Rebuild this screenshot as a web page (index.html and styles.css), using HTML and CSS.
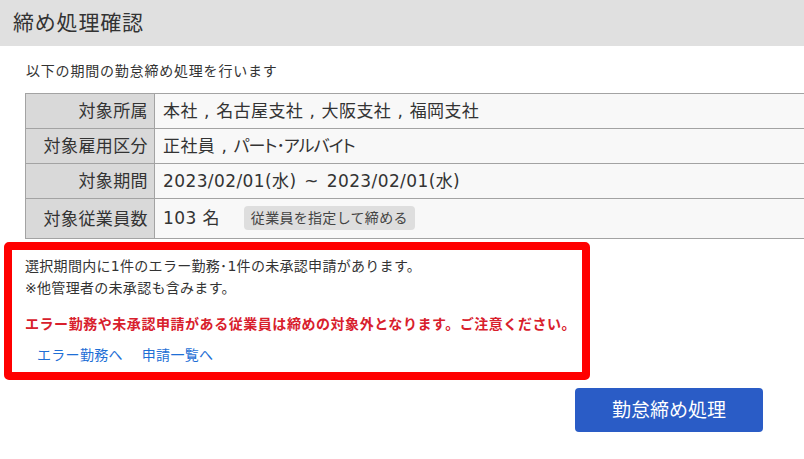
FILE: index.html
```html
<!DOCTYPE html>
<html lang="ja">
<head>
<meta charset="utf-8">
<title>締め処理確認</title>
<link rel="stylesheet" href="styles.css">
</head>
<body>
<header class="page-head">
  <h1 class="page-title">締め処理確認</h1>
</header>
<main class="content">
  <p class="lead">以下の期間の勤怠締め処理を行います</p>
  <table class="summary">
    <tr>
      <th>対象所属</th>
      <td>本社 , 名古屋支社 , 大阪支社 , 福岡支社</td>
    </tr>
    <tr>
      <th>対象雇用区分</th>
      <td>正社員 , <span class="kana">パート･アルバイト</span></td>
    </tr>
    <tr>
      <th>対象期間</th>
      <td class="period">2023/02/01(水) ~ 2023/02/01(水)</td>
    </tr>
    <tr class="row-tall">
      <th>対象従業員数</th>
      <td><span class="count">103 名</span><button class="chip" type="button">従業員を指定して締める</button></td>
    </tr>
  </table>
  <section class="alert">
    <p class="alert-line">選択期間内に1件のエラー勤務･1件の未承認申請があります。</p>
    <p class="alert-line">※他管理者の未承認も含みます。</p>
    <p class="alert-warn">エラー勤務や未承認申請がある従業員は締めの対象外となります。ご注意ください。</p>
    <nav class="alert-links">
      <a href="#">エラー勤務へ</a>
      <a href="#">申請一覧へ</a>
    </nav>
  </section>
  <div class="actions">
    <button class="primary" type="button">勤怠締め処理</button>
  </div>
</main>
</body>
</html>
```
FILE: styles.css
```css
html, body {
  margin: 0;
  padding: 0;
  background: #fff;
  overflow: hidden;
}

/* Verdana-like Latin with a Japanese face for kana and kanji */
body {
  font-family: "DejaVu Sans", "Noto Sans CJK JP", sans-serif;
  color: #333;
  width: 804px;
  height: 459px;
}

.page-head {
  height: 46px;
  background: #e0e0e0;
  padding-left: 13px;
  display: flex;
  align-items: center;
}

.page-title {
  margin: 0;
  font-size: 21px;
  font-weight: 400;
  line-height: 28px;
  letter-spacing: 0.8px;
  color: #333;
}

.content {
  display: flex;
  flex-direction: column;
}

.lead {
  margin: 15px 0 0 26px;
  font-size: 14px;
  line-height: 20px;
  letter-spacing: 0.8px;
}

.summary {
  margin: 12px 0 0 25px;
  width: 800px;
  border-collapse: collapse;
  font-size: 17px;
  letter-spacing: 0.4px;
}

.summary tr {
  height: 35px;
}

.summary tr.row-tall {
  height: 40px;
}

.summary th,
.summary td {
  border: 1px solid #a3a3a3;
  padding: 0;
  line-height: 22px;
  font-weight: 400;
}

.summary th {
  width: 122px;
  background: #d9d9d9;
  text-align: right;
  padding-right: 6px;
  color: #333;
}

.summary td {
  background: #f8f8f8;
  padding-left: 8px;
  color: #333;
  word-spacing: 0.5px;
}

.summary td.period {
  word-spacing: 2px;
}

/* proportional katakana, as the employment type is set narrow */
.kana {
  font-feature-settings: "palt";
  letter-spacing: -1px;
}

.count {
  display: inline-block;
  margin-right: 24px;
  word-spacing: 0;
}

.chip {
  font: inherit;
  font-size: 14px;
  letter-spacing: 0.3px;
  word-spacing: 0;
  line-height: 24px;
  height: 24px;
  padding: 0 7px;
  border: 0;
  border-radius: 4px;
  background: #dedede;
  color: #444;
  vertical-align: middle;
  position: relative;
  top: -1px;
}

.alert {
  box-sizing: border-box;
  margin: 3px 0 0 4px;
  width: 586px;
  border: 8px solid #ff0000;
  border-radius: 5px;
  background: #fff;
  padding: 5px 0 6px 13px;
}

.alert-line {
  margin: 0;
  font-size: 14px;
  line-height: 22px;
  letter-spacing: 0.3px;
  color: #333;
}

.alert-warn {
  margin: 14px 0 0;
  font-size: 14px;
  line-height: 22px;
  letter-spacing: 0.55px;
  font-weight: 700;
  color: #d8202c;
  white-space: nowrap;
}

.alert-links {
  margin: 9px 0 0 12px;
  display: flex;
  gap: 19px;
  font-size: 14px;
  line-height: 22px;
  letter-spacing: 0.3px;
}

.alert-links a {
  color: #1e6fd6;
  text-decoration: none;
}

.actions {
  display: flex;
  justify-content: flex-end;
  padding-right: 41px;
  margin-top: 8px;
}

.primary {
  font: inherit;
  width: 188px;
  height: 44px;
  border: 0;
  border-radius: 4px;
  background: #2a5cc6;
  color: #fff;
  font-size: 19px;
  line-height: 24px;
}
```
